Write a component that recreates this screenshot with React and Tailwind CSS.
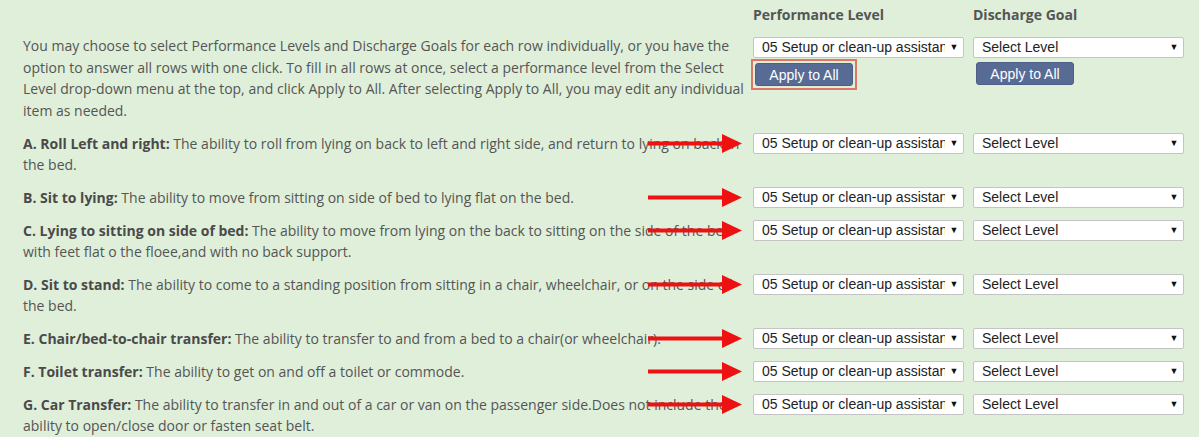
import React from 'react';

const rows = [
  {
    label: 'A. Roll Left and right:',
    text: ' The ability to roll from lying on back to left and right side, and return to lying on back in the bed.',
  },
  {
    label: 'B. Sit to lying:',
    text: ' The ability to move from sitting on side of bed to lying flat on the bed.',
  },
  {
    label: 'C. Lying to sitting on side of bed:',
    text: ' The ability to move from lying on the back to sitting on the side of the bed with feet flat o the floee,and with no back support.',
  },
  {
    label: 'D. Sit to stand:',
    text: ' The ability to come to a standing position from sitting in a chair, wheelchair, or on the side of the bed.',
  },
  {
    label: 'E. Chair/bed-to-chair transfer:',
    text: ' The ability to transfer to and from a bed to a chair(or wheelchair).',
  },
  {
    label: 'F. Toilet transfer:',
    text: ' The ability to get on and off a toilet or commode.',
  },
  {
    label: 'G. Car Transfer:',
    text: ' The ability to transfer in and out of a car or van on the passenger side.Does not include the ability to open/close door or fasten seat belt.',
  },
];

const SelectBox = ({ value }) => (
  <div className="flex items-center h-[21px] w-[211px] bg-white border border-[#c4c4c4] rounded-[2px] pl-[8px] font-['Liberation_Sans',Arial,sans-serif] text-[14px] text-[#222]">
    <span className="flex-1 min-w-0 overflow-hidden whitespace-nowrap leading-[19px]">{value}</span>
    <span className="w-[18px] text-center text-[9px] text-[#111] leading-none">▼</span>
  </div>
);

const ApplyButton = () => (
  <button className="h-[23px] w-[98px] bg-[#586b95] border border-[#4d5f86] rounded-[3px] text-white font-['Liberation_Sans',Arial,sans-serif] text-[14px] leading-none">
    Apply to All
  </button>
);

// red annotation arrow laid over the text, pointing at the first select
const Arrow = () => (
  <svg className="absolute left-[648px] top-[1px]" width="95" height="19" viewBox="0 0 95 19">
    <rect x="0" y="7.5" width="78" height="4" fill="#ee1111" />
    <polygon points="74,0 94,9.5 74,19" fill="#ee1111" />
  </svg>
);

export default function App() {
  return (
    <div className="w-[1199px] h-[437px] overflow-hidden bg-[#dfefda] font-['Open_Sans',sans-serif] text-[14px] text-[#555]">
      {/* header */}
      <div className="grid grid-cols-[721px_211px_211px] gap-x-[9px] pl-[23px] h-[35px] pt-[4px]">
        <div />
        <div className="font-bold leading-[21px]">Performance Level</div>
        <div className="font-bold leading-[21px]">Discharge Goal</div>
      </div>

      {/* apply to all row */}
      <div className="grid grid-cols-[721px_211px_211px] gap-x-[9px] pl-[23px] pb-[6px]">
        <p className="leading-[21.5px]">
          You may choose to select Performance Levels and Discharge Goals for each row individually, or you have the option to answer all rows with one click. To fill in all rows at once, select a performance level from the Select Level drop-down menu at the top, and click Apply to All. After selecting Apply to All, you may edit any individual item as needed.
        </p>
        <div className="pt-[2px]">
          <SelectBox value="05 Setup or clean-up assistance" />
          <div className="inline-block -ml-[2px] mt-[1px] border-2 border-[#de7766] p-[2px] leading-none">
            <ApplyButton />
          </div>
        </div>
        <div className="pt-[2px]">
          <SelectBox value="Select Level" />
          <div className="ml-[3px] mt-[4px] leading-none">
            <ApplyButton />
          </div>
        </div>
      </div>

      {/* activity rows */}
      {rows.map((row) => (
        <div key={row.label} className="relative grid grid-cols-[721px_211px_211px] gap-x-[9px] pl-[23px] py-[6px]">
          <p className="leading-[21px]">
            <strong className="font-bold text-[#4a4a4a]">{row.label}</strong>
            {row.text}
          </p>
          <div>
            <SelectBox value="05 Setup or clean-up assistance" />
          </div>
          <div>
            <SelectBox value="Select Level" />
          </div>
          <div className="absolute left-0 top-[6px]">
            <Arrow />
          </div>
        </div>
      ))}
    </div>
  );
}
